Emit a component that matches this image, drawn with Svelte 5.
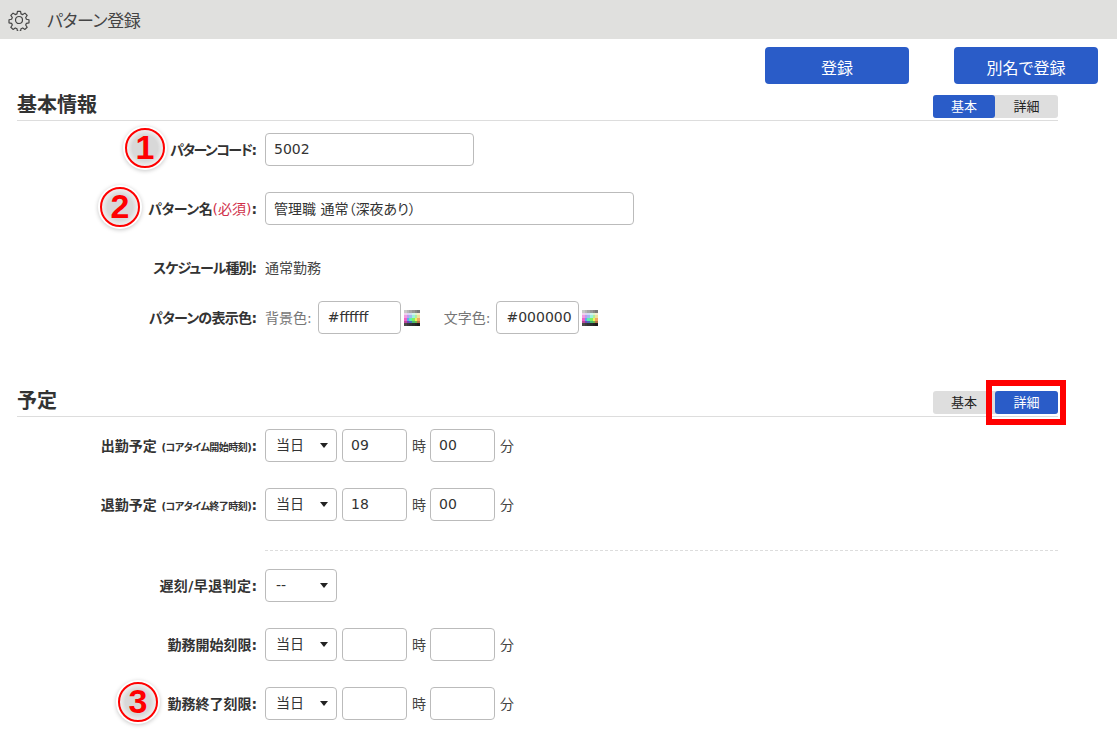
<script>
    // palette swatch next to the colour inputs
    const paletteRows = [
        ['#c8c8c8', '#b8b8b8', '#a8a8a8', '#989898', '#888888', '#787878'],
        ['#f0d0ec', '#dcd0f4', '#d0dcf4', '#d0f4ec', '#dcf4d0', '#f4ecd0'],
        ['#f09ce0', '#bc9cf0', '#9cbcf0', '#9cf0e0', '#b0f09c', '#f0e09c'],
        ['#f060c8', '#60a8f0', '#60f0a8', '#80f060', '#f0f060', '#f0a860'],
        ['#b84898', '#7048b8', '#4870b8', '#48b870', '#70b848', '#b87048'],
        ['#484848', '#3c3c3c', '#343434', '#2c2c2c', '#242424', '#1c1c1c']
    ];

    const timeRows = [
        { label: '勤務開始刻限', hour: '', min: '' },
        { label: '勤務終了刻限', hour: '', min: '', mark: '3' }
    ];
</script>

{#snippet palette()}
    <svg class="palette" width="16" height="16" viewBox="0 0 18 18" shape-rendering="crispEdges">
        {#each paletteRows as row, y}
            {#each row as color, x}
                <rect x={x * 3} y={y * 3} width="3" height="3" fill={color} />
            {/each}
        {/each}
    </svg>
{/snippet}

{#snippet mark(n)}
    <span class="mark"><span class="mark-ring">{n}</span></span>
{/snippet}

{#snippet dayTime(hour, min)}
    <div class="select-wrap">
        <select><option>当日</option></select>
    </div>
    <input class="time" value={hour} />
    <span class="unit">時</span>
    <input class="time" value={min} />
    <span class="unit">分</span>
{/snippet}

<header class="topbar">
    <svg class="gear" width="22" height="22" viewBox="0 0 24 24" fill="none" stroke="#444" stroke-width="1.3" stroke-linejoin="round">
        <path d="M10.3 2.5h3.4l.5 2.8 1.9.8 2.4-1.6 2.4 2.4-1.6 2.4.8 1.9 2.8.5v3.4l-2.8.5-.8 1.9 1.6 2.4-2.4 2.4-2.4-1.6-1.9.8-.5 2.8h-3.4l-.5-2.8-1.9-.8-2.4 1.6-2.4-2.4 1.6-2.4-.8-1.9-2.8-.5v-3.4l2.8-.5.8-1.9-1.6-2.4 2.4-2.4 2.4 1.6 1.9-.8z" />
        <circle cx="12" cy="12" r="3.8" />
    </svg>
    <span class="page-title">パターン登録</span>
</header>

<div class="actions">
    <button class="primary">登録</button>
    <button class="primary">別名で登録</button>
</div>

<section class="first">
    <div class="section-head">
        <h2>基本情報</h2>
        <div class="toggle">
            <span class="tab on">基本</span>
            <span class="tab">詳細</span>
        </div>
    </div>

    <div class="row">
        <div class="label">{@render mark('1')}<span class="tighter">パターンコード</span>:</div>
        <input class="code" value="5002" />
    </div>
    <div class="row">
        <div class="label mark-two">{@render mark('2')}<span class="tight-s">パターン名</span><span class="req">(必須)</span>:</div>
        <input class="name" value="管理職 通常（深夜あり）" />
    </div>
    <div class="row text-row">
        <div class="label"><span class="tight">スケジュール種別</span>:</div>
        <span class="value">通常勤務</span>
    </div>
    <div class="row color-row">
        <div class="label"><span class="tight-m">パターンの表示色</span>:</div>
        <span class="sub">背景色:</span>
        <input class="color" value="#ffffff" />
        {@render palette()}
        <span class="sub second">文字色:</span>
        <input class="color" value="#000000" />
        {@render palette()}
    </div>
</section>

<section class="second-section">
    <div class="section-head">
        <h2>予定</h2>
        <div class="toggle">
            <span class="tab">基本</span>
            <span class="tab on highlighted">詳細</span>
        </div>
    </div>

    <div class="row">
        <div class="label">出勤予定 <small>(コアタイム開始時刻)</small>:</div>
        {@render dayTime('09', '00')}
    </div>
    <div class="row">
        <div class="label">退勤予定 <small>(コアタイム終了時刻)</small>:</div>
        {@render dayTime('18', '00')}
    </div>

    <div class="dash"></div>

    <div class="row">
        <div class="label"><span class="loose">遅刻/早退判定</span>:</div>
        <div class="select-wrap">
            <select><option>--</option></select>
        </div>
    </div>
    {#each timeRows as r}
        <div class="row">
            <div class="label mark-three">
                {#if r.mark}{@render mark(r.mark)}{/if}{r.label}:
            </div>
            {@render dayTime(r.hour, r.min)}
        </div>
    {/each}
</section>

<style>
    :global(body) {
        margin: 0;
        background: #fff;
        color: #333;
        font-family: "DejaVu Sans", "Noto Sans CJK JP", sans-serif;
        font-size: 14px;
        font-feature-settings: "palt";
        overflow: hidden;
    }

    .topbar {
        height: 39px;
        background: #e0e0de;
        display: flex;
        align-items: center;
        padding-left: 8px;
        gap: 17px;
    }
    .gear {
        display: block;
    }
    .page-title {
        font-size: 17px;
        letter-spacing: -.4px;
        color: #444;
    }

    .actions {
        display: flex;
        justify-content: flex-end;
        gap: 45px;
        padding: 8px 19px 0 0;
    }
    .primary {
        width: 144px;
        height: 37px;
        border: none;
        border-radius: 4px;
        padding: 2px 0 0;
        background: #2a5cc8;
        color: #fff;
        font: 16px "Noto Sans CJK JP", sans-serif;
        font-feature-settings: "palt";
    }

    section {
        margin: 0 59px 0 17px;
    }
    .first {
        margin-top: 11px;
    }
    .second-section {
        margin-top: 57px;
    }

    .section-head {
        display: flex;
        justify-content: space-between;
        align-items: flex-end;
        height: 25px;
        border-bottom: 1px solid #ddd;
        margin-bottom: 12px;
    }
    h2 {
        margin: 0;
        font-size: 20px;
        line-height: 20px;
        color: #333;
        position: relative;
        top: -5px;
    }

    .toggle {
        display: flex;
        width: 125px;
        height: 23px;
        margin-bottom: 2px;
        background: #dedede;
        border-radius: 3px;
        position: relative;
    }
    .tab {
        flex: 1;
        text-align: center;
        line-height: 23px;
        font-size: 13px;
        color: #222;
        border-radius: 3px;
    }
    .tab:first-child {
        flex: none;
        width: 62px;
    }
    .tab.on {
        background: #2a5cc8;
        color: #fff;
    }
    .highlighted {
        position: relative;
    }
    /* red box drawn over the screenshot */
    .highlighted::after {
        content: '';
        position: absolute;
        left: -9px;
        right: -8px;
        top: -11px;
        bottom: -11px;
        border: 6px solid #f00;
    }

    .row {
        display: flex;
        align-items: center;
        height: 33px;
        margin-bottom: 26px;
    }
    .text-row {
        margin-bottom: 17px;
    }
    .label {
        width: 240px;
        flex: none;
        margin-right: 8px;
        padding-bottom: 2px;
        text-align: right;
        font-weight: 700;
        color: #333;
        position: relative;
        white-space: nowrap;
    }
    .label small {
        font-size: 10px;
        letter-spacing: -.5px;
    }
    .tighter {
        letter-spacing: -1.5px;
    }
    .tight {
        letter-spacing: -1px;
    }
    .tight-m {
        letter-spacing: -.7px;
    }
    .tight-s {
        letter-spacing: -.4px;
    }
    .loose {
        letter-spacing: .4px;
    }
    .req {
        color: #d0304a;
        font-weight: 400;
    }
    .value {
        padding-bottom: 2px;
        color: #444;
    }
    .sub {
        padding-bottom: 2px;
        color: #777;
        margin-right: 6px;
    }
    .second {
        margin-left: 24px;
    }
    .palette {
        margin-left: 3px;
    }

    input,
    select {
        box-sizing: border-box;
        height: 33px;
        border: 1px solid #bbb;
        border-radius: 4px;
        background: #fff;
        color: #333;
        font: 14px "DejaVu Sans", "Noto Sans CJK JP", sans-serif;
        font-feature-settings: "palt";
        padding: 0 8px 2px;
        outline: none;
    }
    .code {
        width: 209px;
    }
    .name {
        width: 369px;
    }
    .color {
        width: 83px;
        padding: 0 0 2px 9px;
    }
    .time {
        width: 65px;
        margin-left: 5px;
        padding: 0 8px 2px;
    }
    .unit {
        width: 18px;
        margin-left: 5px;
        padding-bottom: 2px;
        color: #444;
    }
    .unit + .time {
        margin-left: 0;
    }

    .select-wrap {
        position: relative;
        width: 72px;
    }
    .select-wrap select {
        width: 72px;
        appearance: none;
        padding: 0 10px 2px;
    }
    .select-wrap::after {
        content: '';
        position: absolute;
        right: 9px;
        top: 14px;
        border-left: 4px solid transparent;
        border-right: 4px solid transparent;
        border-top: 5px solid #222;
        pointer-events: none;
    }

    .dash {
        margin: 3px 0 18px 248px;
        padding-top: 3px;
        border-bottom: 1px dashed #ddd;
    }

    /* numbered callouts pasted over the form */
    .mark {
        position: absolute;
        left: 106px;
        top: calc(50% - 24px);
        width: 44px;
        height: 44px;
        border-radius: 50%;
        background: #fff;
        box-shadow: 0 1px 4px rgba(0, 0, 0, .22);
        display: flex;
        align-items: center;
        justify-content: center;
        letter-spacing: 0;
    }
    .mark-two .mark {
        left: 81px;
    }
    .mark-three .mark {
        left: 99px;
    }
    .mark-ring {
        box-sizing: border-box;
        width: 40px;
        height: 40px;
        border: 2.5px solid #f00;
        border-radius: 50%;
        background: radial-gradient(#d8d8d8 50%, #fff 85%);
        color: #f00;
        font: 700 34px/35px "Liberation Sans", sans-serif;
        text-align: center;
    }
</style>
